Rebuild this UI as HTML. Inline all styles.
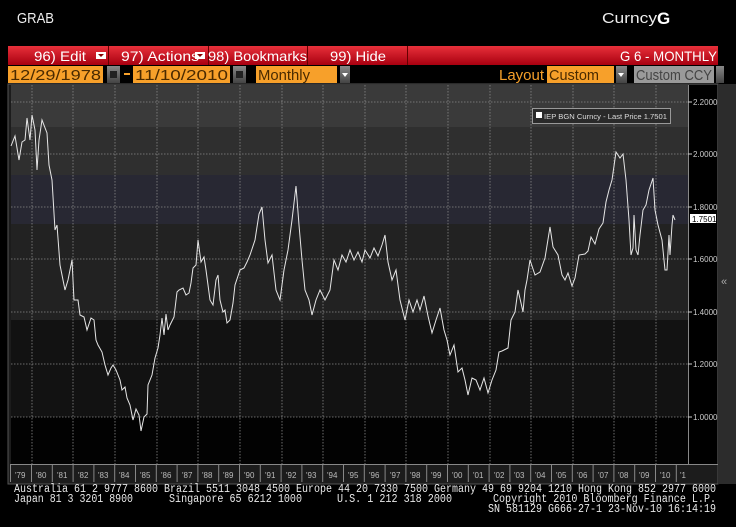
<!DOCTYPE html>
<html><head><meta charset="utf-8"><style>
html,body{margin:0;padding:0;background:#000;width:736px;height:527px;overflow:hidden}
svg{display:block}
text{font-family:"Liberation Sans Narrow","Liberation Sans",sans-serif}
.m{font-family:"Liberation Mono",monospace;font-size:11.5px;fill:#e8e8e8}
</style></head><body>
<svg width="736" height="527" viewBox="0 0 736 527" xmlns="http://www.w3.org/2000/svg">
<defs>
<linearGradient id="rg" x1="0" y1="0" x2="0" y2="1"><stop offset="0" stop-color="#e8303a"/><stop offset="1" stop-color="#a80010"/></linearGradient>
<linearGradient id="gb" x1="0" y1="0" x2="0" y2="1"><stop offset="0" stop-color="#888"/><stop offset="1" stop-color="#444"/></linearGradient>
</defs>
<rect width="736" height="527" fill="#000"/>
<text x="17" y="23" fill="#eee" font-size="15" textLength="37" lengthAdjust="spacingAndGlyphs">GRAB</text>
<text x="602" y="23" fill="#eee" font-size="15" textLength="55" lengthAdjust="spacingAndGlyphs">Curncy</text>
<text x="657" y="24" fill="#fff" font-size="17" font-weight="bold" font-family="Liberation Serif">G</text>
<!-- red bar -->
<rect x="8" y="46" width="710" height="19" fill="url(#rg)"/>
<g stroke="#600" stroke-width="1"><line x1="108.5" y1="46" x2="108.5" y2="65"/><line x1="208.5" y1="46" x2="208.5" y2="65"/><line x1="307.5" y1="46" x2="307.5" y2="65"/><line x1="407.5" y1="46" x2="407.5" y2="65"/></g>
<g fill="#fff" font-size="14">
<text x="34" y="61" textLength="52" lengthAdjust="spacingAndGlyphs">96) Edit</text>
<text x="121" y="61" textLength="78" lengthAdjust="spacingAndGlyphs">97) Actions</text>
<text x="208" y="61" textLength="99" lengthAdjust="spacingAndGlyphs">98) Bookmarks</text>
<text x="330" y="61" textLength="56" lengthAdjust="spacingAndGlyphs">99) Hide</text>
<text x="620" y="61" textLength="97" lengthAdjust="spacingAndGlyphs">G 6 - MONTHLY</text>
</g>
<rect x="96" y="52" width="10" height="7" fill="#fff"/><path d="M98 54h6l-3 3z" fill="#800"/>
<rect x="195" y="52" width="10" height="7" fill="#fff"/><path d="M197 54h6l-3 3z" fill="#800"/>
<!-- orange row -->
<rect x="8" y="66" width="95" height="17" fill="#f7a02a"/>
<rect x="107" y="66" width="13" height="17" fill="url(#gb)"/><rect x="110" y="71" width="7" height="7" fill="#222"/>
<rect x="124" y="73" width="6" height="2" fill="#f7a02a"/>
<rect x="133" y="66" width="97" height="17" fill="#f7a02a"/>
<rect x="233" y="66" width="13" height="17" fill="url(#gb)"/><rect x="236" y="71" width="7" height="7" fill="#222"/>
<rect x="256" y="66" width="81" height="17" fill="#f7a02a"/>
<rect x="340" y="66" width="10" height="17" fill="url(#gb)"/><path d="M342 73h6l-3 4z" fill="#fff"/>
<g fill="#4a2a00" font-size="15">
<text x="10" y="80" textLength="91" lengthAdjust="spacingAndGlyphs">12/29/1978</text>
<text x="135" y="80" textLength="93" lengthAdjust="spacingAndGlyphs">11/10/2010</text>
<text x="258" y="80" textLength="52" lengthAdjust="spacingAndGlyphs">Monthly</text>
<text x="549" y="80" textLength="50" lengthAdjust="spacingAndGlyphs">Custom</text>
</g>
<text x="499" y="80" fill="#f7a02a" font-size="15" textLength="45" lengthAdjust="spacingAndGlyphs">Layout</text>
<rect x="547" y="66" width="67" height="17" fill="#f7a02a"/>
<text x="549" y="80" fill="#4a2a00" font-size="15" textLength="50" lengthAdjust="spacingAndGlyphs">Custom</text>
<rect x="616" y="66" width="11" height="17" fill="url(#gb)"/><path d="M618 73h6l-3 4z" fill="#fff"/>
<rect x="634" y="66" width="80" height="17" fill="#9a9a9a"/>
<text x="636" y="80" fill="#444" font-size="15" textLength="76" lengthAdjust="spacingAndGlyphs">Custom CCY</text>
<rect x="716" y="66" width="8" height="17" fill="url(#gb)"/>
<!-- chart frame -->
<rect x="8" y="84" width="710" height="400" fill="#1c1c1c" stroke="#555"/>
<rect x="11" y="85" width="677" height="42" fill="#3a3a3a"/>
<rect x="11" y="127" width="677" height="48" fill="#2f2f2f"/>
<rect x="11" y="175" width="677" height="49" fill="#282833"/>
<rect x="11" y="224" width="677" height="96" fill="#222"/>
<rect x="11" y="320" width="677" height="97" fill="#121212"/>
<rect x="11" y="417" width="677" height="47" fill="#020202"/>
<rect x="688" y="85" width="29" height="379" fill="#000"/>
<rect x="718" y="84" width="18" height="400" fill="#2c2c2c"/>
<text x="721" y="285" fill="#aaa" font-size="11">«</text>
<line x1="688.5" y1="85" x2="688.5" y2="464" stroke="#888"/>
<!-- grid -->
<g stroke="#888" stroke-width="0.8" stroke-dasharray="1.5,1.5">
<line x1="11" y1="102" x2="688" y2="102"/><line x1="11" y1="154" x2="688" y2="154"/><line x1="11" y1="207" x2="688" y2="207"/><line x1="11" y1="259" x2="688" y2="259"/><line x1="11" y1="312" x2="688" y2="312"/><line x1="11" y1="364" x2="688" y2="364"/><line x1="11" y1="417" x2="688" y2="417"/>
<line x1="32" y1="85" x2="32" y2="464"/><line x1="73" y1="85" x2="73" y2="464"/><line x1="115" y1="85" x2="115" y2="464"/><line x1="157" y1="85" x2="157" y2="464"/><line x1="198" y1="85" x2="198" y2="464"/><line x1="240" y1="85" x2="240" y2="464"/><line x1="282" y1="85" x2="282" y2="464"/><line x1="323" y1="85" x2="323" y2="464"/><line x1="365" y1="85" x2="365" y2="464"/><line x1="406" y1="85" x2="406" y2="464"/><line x1="448" y1="85" x2="448" y2="464"/><line x1="490" y1="85" x2="490" y2="464"/><line x1="531" y1="85" x2="531" y2="464"/><line x1="573" y1="85" x2="573" y2="464"/><line x1="614" y1="85" x2="614" y2="464"/><line x1="656" y1="85" x2="656" y2="464"/>
</g>
<!-- y axis labels -->
<g fill="#ccc" font-size="8" font-family="Liberation Sans">
<text x="693" y="105">2.2000</text><text x="693" y="157">2.0000</text><text x="693" y="210">1.8000</text><text x="693" y="262">1.6000</text><text x="693" y="315">1.4000</text><text x="693" y="367">1.2000</text><text x="693" y="420">1.0000</text>
</g>
<g stroke="#ccc"><line x1="688" y1="102" x2="692" y2="102"/><line x1="688" y1="154" x2="692" y2="154"/><line x1="688" y1="207" x2="692" y2="207"/><line x1="688" y1="259" x2="692" y2="259"/><line x1="688" y1="312" x2="692" y2="312"/><line x1="688" y1="364" x2="692" y2="364"/><line x1="688" y1="417" x2="692" y2="417"/></g>
<rect x="690" y="214" width="26" height="9" fill="#fff"/>
<text x="692" y="222" fill="#000" font-size="8" font-family="Liberation Sans">1.7501</text>
<!-- legend -->
<rect x="532.5" y="108.5" width="138" height="15" fill="#2a2a2a" stroke="#999"/>
<rect x="536" y="112" width="6" height="6" fill="#fff"/>
<text x="544" y="119" fill="#ddd" font-size="7.5" font-family="Liberation Sans" textLength="123" lengthAdjust="spacingAndGlyphs">IEP BGN Curncy - Last Price 1.7501</text>
<!-- data -->
<polyline fill="none" stroke="#e6e6e6" stroke-width="1" points="11,146 15,136 19,160 22,142 25,140 27,118 30,140 32,115 35,130 37,170 39,140 42,120 47,133 49,165 52,180 55,230 57,225 60,265 65,290 68,280 72,260 74,300 78,300 80,315 84,317 87,330 91,318 94,320 96,340 98,345 102,352 105,365 108,375 111,368 113,365 116,370 120,380 122,390 125,387 127,398 130,405 133,420 136,409 139,415 141,431 144,417 147,414 148,385 152,375 155,358 158,348 160,335 162,318 164,335 166,314 168,330 170,325 174,317 177,292 179,290 183,288 186,295 189,293 191,283 193,268 196,265 198,240 201,262 204,257 206,270 210,300 213,305 216,280 218,275 220,300 223,312 225,310 227,323 230,320 233,303 235,285 240,270 244,268 247,262 250,255 255,240 259,214 262,207 265,240 268,263 272,255 276,290 280,300 284,270 288,250 292,220 296,186 299,225 302,260 305,290 309,300 312,315 316,300 320,290 325,300 330,290 334,260 338,270 342,255 346,262 350,250 354,260 358,252 362,262 365,250 370,258 374,248 378,256 382,245 385,235 388,262 392,280 396,270 400,300 405,320 409,300 413,312 417,300 420,310 424,296 428,316 432,333 436,320 440,308 444,330 447,340 450,355 454,345 458,372 462,368 465,380 468,395 472,378 476,380 480,390 484,378 488,393 492,380 496,370 499,352 502,351 508,348 511,320 515,312 518,290 521,303 523,312 525,290 527,280 530,260 535,275 540,272 545,258 550,227 553,247 558,255 562,275 565,280 568,273 572,286 575,278 579,255 585,254 588,251 591,237 595,244 599,229 603,223 606,202 609,190 612,180 616,152 620,158 623,154 626,180 629,220 631,255 633,248 634,215 636,250 638,255 640,235 643,210 646,205 649,190 653,178 655,210 658,225 662,240 665,270 667,270 669,235 670,255 672,225 673,215 675,220"/>
<!-- x axis -->
<line x1="11" y1="464.5" x2="718" y2="464.5" stroke="#888"/>
<g stroke="#888"><line x1="10.5" y1="464" x2="10.5" y2="482"/>
<line x1="31.5" y1="464" x2="31.5" y2="482"/><line x1="52.3" y1="464" x2="52.3" y2="482"/><line x1="73.1" y1="464" x2="73.1" y2="482"/><line x1="93.9" y1="464" x2="93.9" y2="482"/><line x1="114.7" y1="464" x2="114.7" y2="482"/><line x1="135.5" y1="464" x2="135.5" y2="482"/><line x1="156.3" y1="464" x2="156.3" y2="482"/><line x1="177.1" y1="464" x2="177.1" y2="482"/><line x1="197.9" y1="464" x2="197.9" y2="482"/><line x1="218.7" y1="464" x2="218.7" y2="482"/><line x1="239.5" y1="464" x2="239.5" y2="482"/><line x1="260.3" y1="464" x2="260.3" y2="482"/><line x1="281.1" y1="464" x2="281.1" y2="482"/><line x1="301.9" y1="464" x2="301.9" y2="482"/><line x1="322.7" y1="464" x2="322.7" y2="482"/><line x1="343.5" y1="464" x2="343.5" y2="482"/><line x1="364.3" y1="464" x2="364.3" y2="482"/><line x1="385.1" y1="464" x2="385.1" y2="482"/><line x1="405.9" y1="464" x2="405.9" y2="482"/><line x1="426.7" y1="464" x2="426.7" y2="482"/><line x1="447.5" y1="464" x2="447.5" y2="482"/><line x1="468.3" y1="464" x2="468.3" y2="482"/><line x1="489.1" y1="464" x2="489.1" y2="482"/><line x1="509.9" y1="464" x2="509.9" y2="482"/><line x1="530.7" y1="464" x2="530.7" y2="482"/><line x1="551.5" y1="464" x2="551.5" y2="482"/><line x1="572.3" y1="464" x2="572.3" y2="482"/><line x1="593.1" y1="464" x2="593.1" y2="482"/><line x1="613.9" y1="464" x2="613.9" y2="482"/><line x1="634.7" y1="464" x2="634.7" y2="482"/><line x1="655.5" y1="464" x2="655.5" y2="482"/><line x1="676.3" y1="464" x2="676.3" y2="482"/></g>
<g fill="#bbb" font-size="8" font-family="Liberation Sans">
<text x="15" y="478">'79</text><text x="36" y="478">'80</text><text x="57" y="478">'81</text><text x="78" y="478">'82</text><text x="98" y="478">'83</text><text x="119" y="478">'84</text><text x="140" y="478">'85</text><text x="161" y="478">'86</text><text x="182" y="478">'87</text><text x="202" y="478">'88</text><text x="223" y="478">'89</text><text x="244" y="478">'90</text><text x="265" y="478">'91</text><text x="286" y="478">'92</text><text x="306" y="478">'93</text><text x="327" y="478">'94</text><text x="348" y="478">'95</text><text x="369" y="478">'96</text><text x="390" y="478">'97</text><text x="410" y="478">'98</text><text x="431" y="478">'99</text><text x="452" y="478">'00</text><text x="473" y="478">'01</text><text x="494" y="478">'02</text><text x="514" y="478">'03</text><text x="535" y="478">'04</text><text x="556" y="478">'05</text><text x="577" y="478">'06</text><text x="598" y="478">'07</text><text x="618" y="478">'08</text><text x="639" y="478">'09</text><text x="660" y="478">'10</text><text x="680" y="478">'1</text>
</g>
<!-- footer -->
<text class="m" x="14" y="492" textLength="702" lengthAdjust="spacingAndGlyphs">Australia 61 2 9777 8600 Brazil 5511 3048 4500 Europe 44 20 7330 7500 Germany 49 69 9204 1210 Hong Kong 852 2977 6000</text>
<text class="m" x="14" y="502" textLength="119" lengthAdjust="spacingAndGlyphs">Japan 81 3 3201 8900</text>
<text class="m" x="169" y="502" textLength="133" lengthAdjust="spacingAndGlyphs">Singapore 65 6212 1000</text>
<text class="m" x="337" y="502" textLength="115" lengthAdjust="spacingAndGlyphs">U.S. 1 212 318 2000</text>
<text class="m" x="493" y="502" textLength="223" lengthAdjust="spacingAndGlyphs">Copyright 2010 Bloomberg Finance L.P.</text>
<text class="m" x="488" y="512" textLength="228" lengthAdjust="spacingAndGlyphs">SN 581129 G666-27-1 23-Nov-10 16:14:19</text>
</svg>
</body></html>
